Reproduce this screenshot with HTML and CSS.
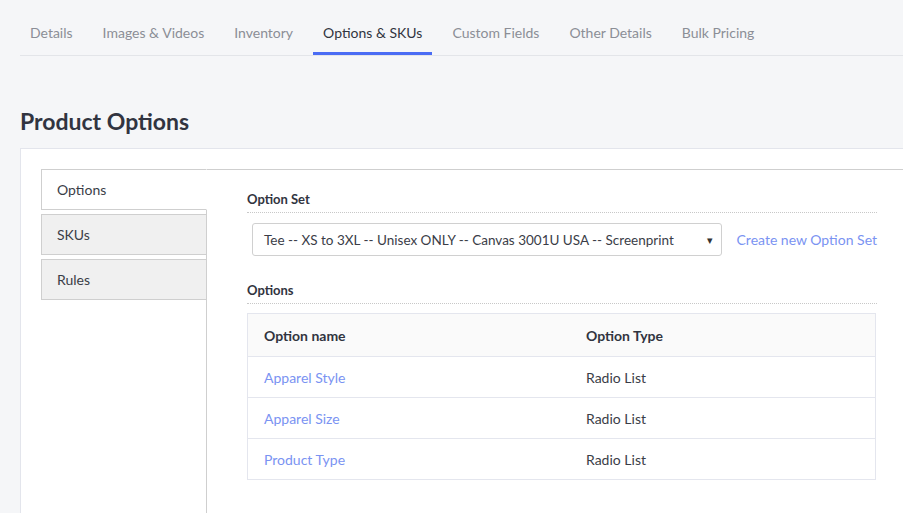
FILE: index.html
```html
<!DOCTYPE html>
<html>
<head>
<meta charset="utf-8">
<link rel="stylesheet" href="styles.css">
</head>
<body>
<div class="page">
  <nav class="tabs">
    <a class="tab">Details</a>
    <a class="tab">Images &amp; Videos</a>
    <a class="tab">Inventory</a>
    <a class="tab active">Options &amp; SKUs</a>
    <a class="tab">Custom Fields</a>
    <a class="tab">Other Details</a>
    <a class="tab">Bulk Pricing</a>
  </nav>
  <h1 class="title">Product Options</h1>
  <section class="panel">
    <div class="vtabs">
      <div class="vnav">
        <div class="vtab active">Options</div>
        <div class="vtab">SKUs</div>
        <div class="vtab">Rules</div>
      </div>
      <div class="pane">
        <div class="content">
          <div class="label">Option Set</div>
          <div class="set-row">
            <div class="select">
              <span>Tee -- XS to 3XL -- Unisex ONLY -- Canvas 3001U USA -- Screenprint</span>
              <span class="caret">▾</span>
            </div>
            <a class="link">Create new Option Set</a>
          </div>
          <div class="label">Options</div>
          <table class="opts">
            <thead>
              <tr><th class="c1">Option name</th><th>Option Type</th></tr>
            </thead>
            <tbody>
              <tr><td class="c1"><a class="link">Apparel Style</a></td><td>Radio List</td></tr>
              <tr><td class="c1"><a class="link">Apparel Size</a></td><td>Radio List</td></tr>
              <tr><td class="c1"><a class="link">Product Type</a></td><td>Radio List</td></tr>
            </tbody>
          </table>
        </div>
      </div>
    </div>
  </section>
</div>
</body>
</html>
```
FILE: styles.css
```css
html, body {
  margin: 0;
  padding: 0;
}
body {
  background: #f5f6f8;
  font-family: Lato, "Noto Sans", sans-serif;
  color: #3a3d47;
  overflow: hidden;
  width: 903px;
  height: 513px;
}
.page {
  padding-left: 20px;
  height: 513px;
  box-sizing: border-box;
  display: flex;
  flex-direction: column;
}
.tabs {
  display: flex;
  gap: 10px;
  padding-top: 13px;
  border-bottom: 1px solid #e3e5e9;
}
.tab {
  font-size: 14px;
  line-height: 20px;
  padding: 10px 10px 9px;
  border-bottom: 3px solid transparent;
  color: #8b8e96;
  white-space: nowrap;
}
.tab.active {
  color: #313440;
  border-bottom-color: #4a6cf4;
}
.title {
  margin: 50px 0 12px;
  font-size: 23px;
  line-height: 30px;
  font-weight: 700;
  color: #313440;
}
.panel {
  flex: 1;
  min-height: 0;
  overflow: hidden;
  background: #fff;
  border: 1px solid #e3e5ec;
  border-right: none;
  border-bottom: none;
  padding: 20px 0 0 20px;
}
.vtabs {
  display: flex;
  height: 100%;
}
.vnav {
  width: 166px;
  flex: none;
  display: flex;
  flex-direction: column;
  gap: 4px;
  position: relative;
  z-index: 1;
}
.vtab {
  height: 39px;
  line-height: 39px;
  padding-left: 15px;
  font-size: 14px;
  color: #3a3d47;
  background: #f0f0f0;
  border: 1px solid #cfcfcf;
}
.vtab.active {
  background: #fff;
  border-right-color: #fff;
}
.pane {
  flex: 1;
  margin-left: -1px;
  border-top: 1px solid #cfcfcf;
  border-left: 1px solid #cfcfcf;
  padding: 0 0 0 40px;
}
.content {
  width: 630px;
}
.label {
  font-size: 13px;
  line-height: 18px;
  font-weight: 700;
  color: #313440;
  padding: 20px 0 4px;
  border-bottom: 1px dotted #c8c8c8;
}
.set-row {
  display: flex;
  align-items: center;
  gap: 15px;
  margin: 10px 0 0 5px;
}
.select {
  width: 449px;
  height: 31px;
  border: 1px solid #d0d0d0;
  border-radius: 3px;
  padding: 0 8px 0 11px;
  display: flex;
  align-items: center;
  justify-content: space-between;
  font-size: 13.5px;
  color: #3a3d47;
}
.caret {
  font-size: 11px;
  color: #333;
}
.link {
  color: #7a93f2;
  font-size: 14px;
  white-space: nowrap;
}
.set-row + .label {
  padding-top: 25px;
}
.opts {
  margin-top: 9px;
  width: 629px;
  border-collapse: collapse;
  border: 1px solid #e4e6ee;
  font-size: 14px;
}
.opts th {
  text-align: left;
  height: 42px;
  background: #fafafa;
  font-weight: 700;
  color: #313440;
  padding: 0 16px;
  border-bottom: 1px solid #e4e6ee;
}
.opts td {
  height: 40px;
  padding: 0 16px;
  border-bottom: 1px solid #e4e6ee;
}
.opts .c1 {
  width: 290px;
}
```
